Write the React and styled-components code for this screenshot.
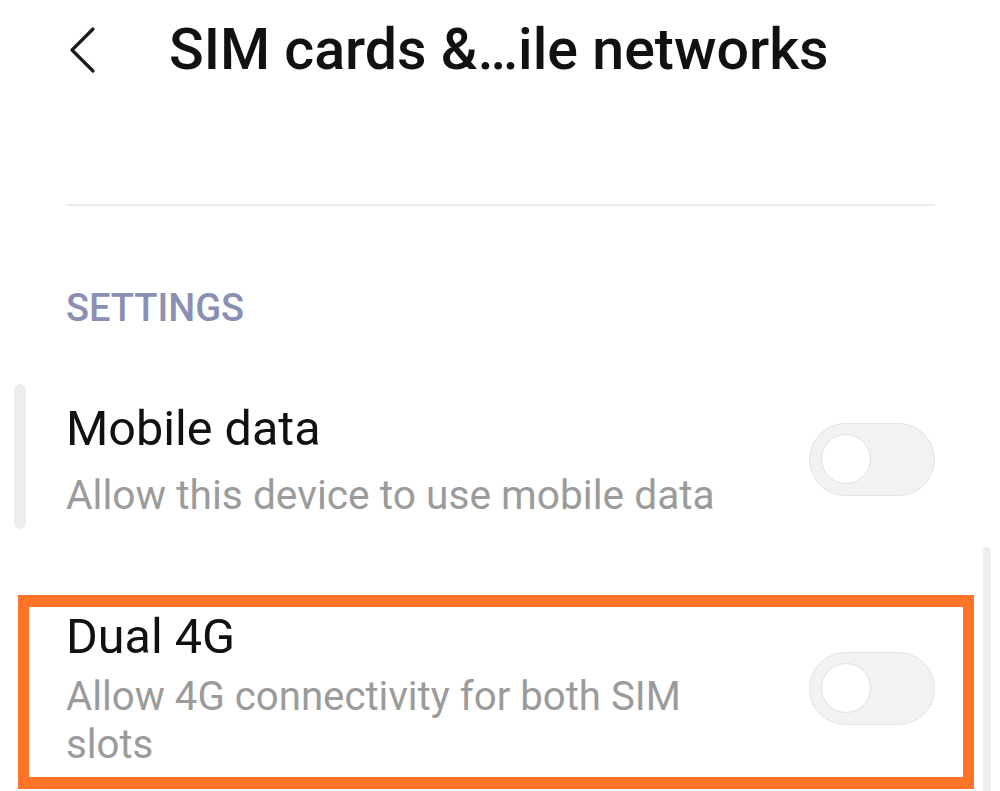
import React from 'react';
import styled, { createGlobalStyle } from 'styled-components';

const GlobalStyle = createGlobalStyle`
  html, body {
    margin: 0;
    padding: 0;
    background: #fff;
  }
  body {
    font-family: Roboto, "Noto Sans", "Liberation Sans", sans-serif;
    color: #111;
  }
`;

const Screen = styled.div`
  position: relative;
  width: 1000px;
  height: 791px;
  overflow: hidden;
  background: #fff;
`;

const Header = styled.div`
  display: flex;
  align-items: center;
  height: 100px;
  padding-left: 68px;
`;

const BackButton = styled.svg`
  width: 30px;
  height: 48px;
  flex-shrink: 0;
`;

const Title = styled.h1`
  margin: 0 0 0 71px;
  font-size: 57.3px;
  line-height: 100px;
  font-weight: 500;
  color: #111;
  white-space: nowrap;
`;

const Divider = styled.div`
  height: 2px;
  margin: 104px 65px 0 66px;
  background: #ececec;
`;

const SectionLabel = styled.div`
  margin: 77px 0 0 66px;
  font-size: 38px;
  line-height: 50px;
  font-weight: 500;
  color: #8a8fb4;
`;

const Row = styled.div`
  display: flex;
  align-items: center;
  justify-content: space-between;
  padding: ${p => p.$pad || '66px 65px 0 66px'};
`;

const Text = styled.div`
  max-width: 710px;
`;

const RowTitle = styled.div`
  font-size: 48.5px;
  line-height: 60px;
  color: #111;
`;

const RowSub = styled.div`
  margin-top: ${p => p.$gap || 12}px;
  font-size: ${p => p.$size || 40.7}px;
  line-height: 48px;
  color: #9b9b9b;
`;

const Toggle = styled.div`
  display: flex;
  align-items: center;
  box-sizing: border-box;
  width: 126px;
  height: 73px;
  padding-left: 11px;
  border-radius: 37px;
  background: #f2f2f2;
  border: 1.5px solid #e3e3e3;
  flex-shrink: 0;
`;

const Knob = styled.div`
  width: 50px;
  height: 50px;
  border-radius: 50%;
  background: #fff;
  border: 1px solid #e0e0e0;
  box-sizing: border-box;
`;

const Highlight = styled.div`
  margin: 76px 26px 0 18px;
  border: 11px solid #ff7427;
  border-top-width: 12px;
  border-bottom-width: 12px;
`;

const ScrollIndicator = styled.div`
  position: absolute;
  left: ${p => p.$left}px;
  top: ${p => p.$top}px;
  width: ${p => p.$width}px;
  height: ${p => p.$height}px;
  border-radius: ${p => p.$width / 2}px;
  background: #ededed;
`;

const Switch = () => (
  <Toggle>
    <Knob />
  </Toggle>
);

export default function App() {
  return (
    <Screen>
      <GlobalStyle />
      <Header>
        <BackButton viewBox="0 0 30 48" fill="none">
          <path d="M25 3 L4 24 L25 45" stroke="#1a1a1a" strokeWidth="3.2" strokeLinecap="round" strokeLinejoin="round" />
        </BackButton>
        <Title>SIM cards &amp;…ile networks</Title>
      </Header>
      <Divider />
      <SectionLabel>SETTINGS</SectionLabel>
      <Row>
        <Text>
          <RowTitle>Mobile data</RowTitle>
          <RowSub>Allow this device to use mobile data</RowSub>
        </Text>
        <Switch />
      </Row>
      <Highlight>
        <Row $pad="0 28px 8px 37px">
          <Text>
            <RowTitle>Dual 4G</RowTitle>
            <RowSub $gap={6} $size={40.2}>Allow 4G connectivity for both SIM slots</RowSub>
          </Text>
          <Switch />
        </Row>
      </Highlight>
      <ScrollIndicator $left={14} $top={384} $width={12} $height={145} />
      <ScrollIndicator $left={983} $top={547} $width={8} $height={260} />
    </Screen>
  );
}
